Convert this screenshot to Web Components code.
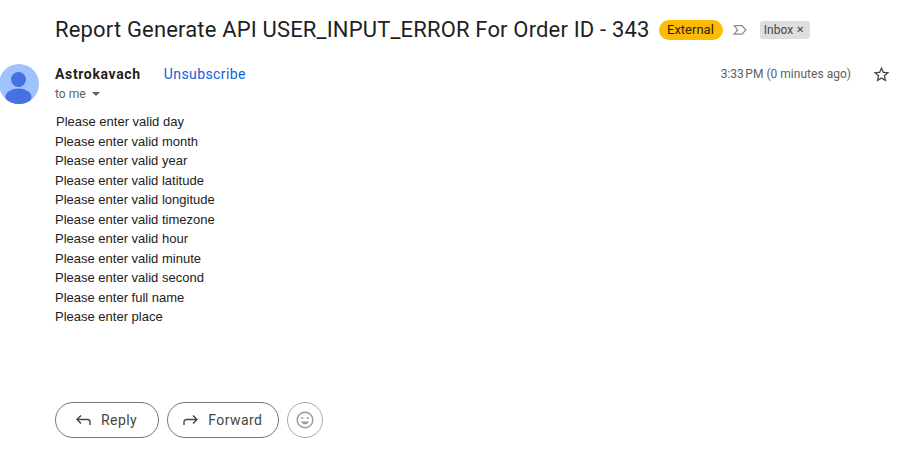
<!DOCTYPE html>
<html>
<head>
<meta charset="utf-8">
<title>Report Generate API USER_INPUT_ERROR</title>
<style>
    html, body { margin: 0; background: #fff; }
    body { width: 903px; height: 460px; overflow: hidden; font-family: Roboto, "Liberation Sans", sans-serif; }
</style>
</head>
<body>
<mail-view>
    <mail-subject slot="subject">Report Generate API USER_INPUT_ERROR For Order ID - 343</mail-subject>
    <mail-header slot="header"></mail-header>
    <mail-body slot="body">
        <div style="padding-left:1px">Please enter valid day</div>
        <div>Please enter valid month</div>
        <div>Please enter valid year</div>
        <div>Please enter valid latitude</div>
        <div>Please enter valid longitude</div>
        <div>Please enter valid timezone</div>
        <div>Please enter valid hour</div>
        <div>Please enter valid minute</div>
        <div>Please enter valid second</div>
        <div>Please enter full name</div>
        <div>Please enter place</div>
    </mail-body>
    <mail-actions slot="actions"></mail-actions>
</mail-view>

<script>
class MailView extends HTMLElement {
    constructor() {
        super();
        this.attachShadow({ mode: 'open' });
        this.shadowRoot.innerHTML = `
            <style>
                :host { display: block; height: 460px; }
            </style>
            <slot name="subject"></slot>
            <slot name="header"></slot>
            <slot name="body"></slot>
            <slot name="actions"></slot>
        `;
    }
}

class MailSubject extends HTMLElement {
    constructor() {
        super();
        this.attachShadow({ mode: 'open' });
        this.shadowRoot.innerHTML = `
            <style>
                :host { display: flex; align-items: center; height: 28px; padding: 16px 0 0 55px; color: #1f1f1f; }
                .title { font-size: 22px; line-height: 28px; white-space: nowrap; letter-spacing: .165px; }
                .external {
                    margin-left: 9px; height: 20px; padding: 0 9px 0 8.5px; border-radius: 10px;
                    background: #fdbb05; color: #302500; font-size: 13px; line-height: 20px;
                }
                svg { margin-left: 10px; display: block; }
                .label {
                    margin-left: 13px; height: 18px; padding: 0 6px 0 4px; border-radius: 3px;
                    display: flex; align-items: center; gap: 3px;
                    background: #dddfdd; color: #444746; font-size: 12px;
                }
                .x { font-size: 10px; line-height: 1; color: #444746; }
            </style>
            <div class="title"><slot></slot></div>
            <div class="external">External</div>
            <svg width="14" height="12" viewBox="0 0 15 12" fill="none" stroke="#8a8a8a" stroke-width="1.3">
                <path d="M1.2 1.2h8.4l4.200 4.800-4.200 4.400H1.200L5 6z"/>
            </svg>
            <div class="label">Inbox <span class="x">✕</span></div>
        `;
    }
}

class MailHeader extends HTMLElement {
    constructor() {
        super();
        this.attachShadow({ mode: 'open' });
        this.shadowRoot.innerHTML = `
            <style>
                :host { display: flex; height: 40px; padding-top: 20px; align-items: flex-start; }
                .avatar { width: 40px; height: 40px; flex: none; margin-left: -1px; display: block; }
                .info { flex: 1; margin-left: 16px; }
                .who { display: flex; align-items: baseline; height: 20px; line-height: 20px; }
                .name { font-size: 14px; font-weight: 700; color: #1f1f1f; letter-spacing: .65px; }
                .unsub { margin-left: 23px; font-size: 14px; color: #0b62e0; letter-spacing: .4px; }
                .to { display: flex; align-items: center; gap: 6px; font-size: 12px; line-height: 20px; color: #5e5e5e; }
                .caret { width: 0; height: 0; border: 4px solid transparent; border-top: 4px solid #5e5e5e; border-bottom: 0; }
                .meta { display: flex; align-items: center; height: 20px; margin-right: 12.5px; }
                .time { font-size: 12px; color: #5e5e5e; letter-spacing: .02px; }
                svg.star { margin-left: 20.5px; display: block; }
            </style>
            <svg class="avatar" viewBox="0 0 40 40">
                <defs><clipPath id="c"><circle cx="20" cy="20" r="20"/></clipPath></defs>
                <circle cx="20" cy="20" r="20" fill="#a0c3ff"/>
                <g clip-path="url(#c)">
                    <circle cx="19.5" cy="15.500" r="7.500" fill="#4571e3"/>
                    <ellipse cx="19.500" cy="33" rx="13" ry="8.500" fill="#4571e3"/>
                </g>
            </svg>
            <div class="info">
                <div class="who"><span class="name">Astrokavach</span><span class="unsub">Unsubscribe</span></div>
                <div class="to">to me <span class="caret"></span></div>
            </div>
            <div class="meta">
                <span class="time">3:33\u202fPM (0 minutes ago)</span>
                <svg class="star" width="19" height="19" viewBox="0 0 24 24" fill="#444746">
                    <path d="M22 9.24l-7.19-.62L12 2 9.19 8.63 2 9.24l5.46 4.73L5.82 21 12 17.27 18.18 21l-1.63-7.03L22 9.24zM12 15.4l-3.76 2.27 1-4.28-3.32-2.88 4.38-.38L12 6.1l1.71 4.04 4.38.38-3.32 2.88 1 4.28L12 15.4z"/>
                </svg>
            </div>
        `;
    }
}

class MailBody extends HTMLElement {
    constructor() {
        super();
        this.attachShadow({ mode: 'open' });
        this.shadowRoot.innerHTML = `
            <style>
                :host {
                    display: block; padding: 8px 0 0 55px; height: 290px;
                    font-family: "Liberation Sans", Arial, sans-serif; font-size: 13px; line-height: 19.5px; color: #222;
                }
            </style>
            <slot></slot>
        `;
    }
}

class MailButton extends HTMLElement {
    constructor() {
        super();
        this.attachShadow({ mode: 'open' });
        this.shadowRoot.innerHTML = `
            <style>
                :host {
                    display: inline-flex; align-items: center; box-sizing: border-box; height: 36px;
                    padding: 0 16px 0 20px; border: 1px solid #747775; border-radius: 18px;
                    font-size: 14px; color: #444746; letter-spacing: .45px; gap: 10px;
                }
                ::slotted(svg) { display: block; }
            </style>
            <slot name="icon"></slot><slot></slot>
        `;
    }
}

class MailActions extends HTMLElement {
    constructor() {
        super();
        this.attachShadow({ mode: 'open' });
        this.shadowRoot.innerHTML = `
            <style>
                :host { display: flex; align-items: center; gap: 8px; padding-left: 55px; }
                .reply { padding: 0 21px 0 20px; }
                .forward { padding: 0 16px 0 15px; }
                .emoji {
                    box-sizing: border-box; width: 36px; height: 36px; border: 1px solid #a8a8a8; border-radius: 50%;
                    display: flex; align-items: center; justify-content: center;
                }
            </style>
            <mail-button class="reply">
                <svg slot="icon" width="15" height="12" viewBox="0 0 15 12" fill="none" stroke="#444746" stroke-width="1.4">
                    <path d="M5 1.5L1 5.5l4 4M1 5.5h10.5c1.4 0 2.5 1.100 2.500 2.500v3"/>
                </svg>
                Reply
            </mail-button>
            <mail-button class="forward">
                <svg slot="icon" width="15" height="12" viewBox="0 0 15 12" fill="none" stroke="#444746" stroke-width="1.4">
                    <path d="M10 1.5l4 4-4 4M14 5.5H3.500C2.100 5.500 1 6.600 1 8v3"/>
                </svg>
                Forward
            </mail-button>
            <div class="emoji">
                <svg width="18" height="18" viewBox="0 0 18 18" fill="none" stroke="#9a9a9a" stroke-width="1.4">
                    <circle cx="9" cy="9" r="7.800"/>
                    <circle cx="6.300" cy="7" r="1.100" fill="#9a9a9a" stroke="none"/>
                    <circle cx="11.700" cy="7" r="1.100" fill="#9a9a9a" stroke="none"/>
                    <path d="M5.200 10.400h7.600c-.5 1.800-2 2.900-3.800 2.900s-3.300-1.100-3.800-2.900z" fill="#9a9a9a" stroke="none"/>
                </svg>
            </div>
        `;
    }
}

customElements.define('mail-view', MailView);
customElements.define('mail-subject', MailSubject);
customElements.define('mail-header', MailHeader);
customElements.define('mail-body', MailBody);
customElements.define('mail-button', MailButton);
customElements.define('mail-actions', MailActions);
</script>
</body>
</html>
